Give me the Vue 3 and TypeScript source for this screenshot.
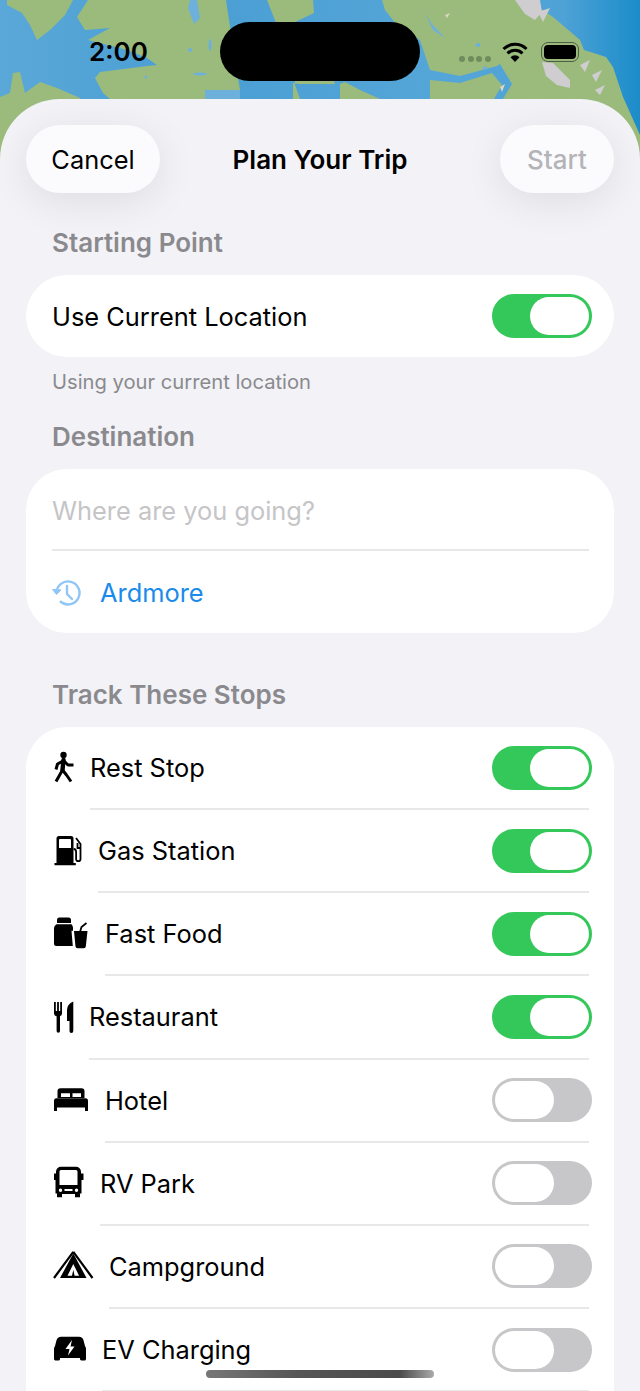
<script setup lang="ts">
interface Stop {
  name: string
  on: boolean
  width: number
  icon: string
}

const stops: Stop[] = [
  { name: 'Rest Stop', on: true, width: 23, icon: 'walk' },
  { name: 'Gas Station', on: true, width: 31, icon: 'gas' },
  { name: 'Fast Food', on: true, width: 38, icon: 'food' },
  { name: 'Restaurant', on: true, width: 22, icon: 'fork' },
  { name: 'Hotel', on: false, width: 38, icon: 'bed' },
  { name: 'RV Park', on: false, width: 33, icon: 'bus' },
  { name: 'Campground', on: false, width: 42, icon: 'tent' },
  { name: 'EV Charging', on: false, width: 35, icon: 'car' },
]
</script>

<template>
  <div class="page">
    <svg class="map" width="640" height="190" viewBox="0 0 640 190">
      <defs>
        <linearGradient id="sea" x1="0" y1="0" x2="1" y2="0">
          <stop offset="0" stop-color="#5aa8d8" />
          <stop offset="0.3" stop-color="#4a9ed3" />
          <stop offset="0.7" stop-color="#55a6d8" />
          <stop offset="0.88" stop-color="#4ea2d6" />
          <stop offset="1" stop-color="#1b8cca" />
        </linearGradient>
        <filter id="soft"><feGaussianBlur stdDeviation="0.7" /></filter>
      </defs>
      <rect width="640" height="190" fill="url(#sea)" />
      <g fill="#9bbb7d" filter="url(#soft)">
        <!-- top left land -->
        <path d="M7 0H73L65 15 50 30 37 40 30 25 22 13 7 5Z" />
        <!-- middle land, north of the inlet -->
        <path d="M88 0H226L232 40 240 90 212 98H205L190 90 160 72 157 65 147 58 127 50 100 43 88 40 110 28 85 30 77 17Z" />
        <path d="M157 65L147 66 100 72 95 78 103 93 110 99H205V90Z" />
        <!-- bottom left land -->
        <path d="M0 97L10 93 13 73 20 72 25 93 40 82 57 88 80 98 80 190H0Z" />
        <!-- between the bays -->
        <path d="M267 0H313L314 13 293 23 295 85 300 99H293V83L300 84Z" />
        <path d="M298 84H335L330 70H300Z" />
        <path d="M340 99V84L345 82 360 90 380 99Z" />
        <!-- main land on the right -->
        <path d="M382 0H528L553 17 580 40 584 50 606 57 613 67 623 97 640 135V190H540V99H503L512 84 500 64 497 66 460 76 430 70 420 40 397 25 385 10Z" />
        <path d="M430 80L460 83 492 73 502 85 494 99H430Z" />
        <path d="M0 120H70V190H0Z" />
      </g>
      <g fill="#6db0dc" filter="url(#soft)">
        <path d="M190 0H197L200 18 194 24 188 8Z" />
        <ellipse cx="190" cy="50" rx="2" ry="2" />
        <ellipse cx="210" cy="45" rx="1.500" ry="6" />
        <ellipse cx="200" cy="74" rx="7" ry="1.500" />
        <ellipse cx="146" cy="77" rx="1.500" ry="1.500" />
        <ellipse cx="478" cy="45" rx="2.500" ry="2" />
        <ellipse cx="485" cy="68" rx="2.500" ry="1.500" />
        <path d="M425 14L432 24 445 38 433 30Z" />
        <path d="M205 90H240V99H205Z" />
      </g>
      <g fill="#cfcdd0" filter="url(#soft)">
        <path d="M515 0H540L542 12 535 20 525 14Z" />
        <path d="M538 12L550 8 543 22Z" />
        <path d="M542 62L553 63 570 80 570 88 557 85 546 76Z" />
        <path d="M580 65L590 60 585 72Z M592 75L602 70 596 82Z M595 90L605 85 600 95Z" />
        <path d="M445 15L450 13 447 18Z M500 87L505 84 502 92Z" fill="#dcd8c0" />
      </g>
    </svg>

    <div class="status">
      <span class="time">2:00</span>
      <div class="island"></div>
      <div class="signal"><i></i><i></i><i></i><i></i></div>
      <svg class="wifi" width="26" height="20" viewBox="0 0 26 20">
        <path d="M1.500 7a16.500 16.500 0 0 1 23 0M5.500 11.300a11 11 0 0 1 15 0" fill="none" stroke="#000" stroke-width="3" />
        <path d="M13 20l-4.500-4.700a6 6 0 0 1 9 0z" fill="#000" />
      </svg>
      <div class="battery"><div class="battery__fill"></div></div>
    </div>

    <main class="sheet">
      <header class="bar">
        <button class="pill pill--cancel">Cancel</button>
        <h1>Plan Your Trip</h1>
        <button class="pill pill--start">Start</button>
      </header>

      <h2 class="label label--first">Starting Point</h2>
      <section class="card">
        <div class="row-single">
          <span>Use Current Location</span>
          <div class="toggle toggle--on"><div class="toggle__knob"></div></div>
        </div>
      </section>
      <p class="note">Using your current location</p>

      <h2 class="label label--dest">Destination</h2>
      <section class="card card--dest">
        <div class="placeholder">Where are you going?</div>
        <div class="recent">
          <svg width="29" height="30" viewBox="0 0 29 30" fill="none" stroke="#8fc6f6" stroke-width="2.400">
            <path d="M4.500 15a11.500 11.500 0 1 1 3.500 8.200" />
            <path d="M0.500 11.500l4 5 4.500-4.600z" fill="#8fc6f6" stroke-width="1" />
            <path d="M15 8v8l5 5" stroke-linecap="round" />
          </svg>
          <span>Ardmore</span>
        </div>
      </section>

      <h2 class="label label--track">Track These Stops</h2>
      <section class="card card--stops">
        <div v-for="stop in stops" :key="stop.name" class="stop">
          <svg class="stop__icon" :width="stop.width" height="40" :viewBox="`0 0 ${stop.width} 40`">
            <g v-if="stop.icon === 'walk'">
              <circle cx="11.500" cy="7" r="3.200" />
              <path d="M11.500 12L10.500 22" fill="none" stroke="#000" stroke-width="4.400" stroke-linecap="round" />
              <path d="M11 13L5.500 16 4 21.500M12 13l4 4h5.500M10.500 22l-6.500 11.500M10.500 22l4 5 4.500 6.500" fill="none" stroke="#000" stroke-width="3" stroke-linejoin="round" />
            </g>
            <g v-else-if="stop.icon === 'gas'">
              <path fill-rule="evenodd" d="M7 5h12a2.500 2.500 0 0 1 2.500 2.500V32h2.300v2.200H2.500V32h2V7.500A2.500 2.500 0 0 1 7 5zM8 8a1 1 0 0 0-1 1v8h12V9a1 1 0 0 0-1-1z" />
              <path d="M24 7l4.500 6v15a2.200 2.200 0 0 1-4.400 0v-7q0-3-2.500-3M25.500 12v5h3" fill="none" stroke="#000" stroke-width="1.800" />
            </g>
            <g v-else-if="stop.icon === 'food'">
              <path d="M7 3.500h9.500a2.500 2.500 0 0 1 2.500 2.500v3h-14V6A2.500 2.500 0 0 1 7 3.500z" />
              <path d="M4.500 10.300H19.500q1.500 1.500 1.500 3.500v3h-1.500l1.300 15.200H4.500A2.500 2.500 0 0 1 2 29.500V14q0-2 2.500-3.700z" />
              <path d="M22 17h13.500l-1.700 15.500a2 2 0 0 1-2 1.800h-6.300a2 2 0 0 1-2-1.800z" />
              <path d="M28 18l1.500-5 5-4" fill="none" stroke="#000" stroke-width="1.800" />
            </g>
            <g v-else-if="stop.icon === 'fork'">
              <path d="M2 5h1.800v9h1.300V5h1.800v9h1.300V5H10v11.500a3 3 0 0 1-2 2.800V34a1.700 1.700 0 0 1-3.400 0V19.300A3 3 0 0 1 2 16.500z" />
              <path d="M21.300 4.500V34a1.900 1.900 0 0 1-3.800 0V24h-2.500V13q0-6 6.300-8.500z" />
            </g>
            <g v-else-if="stop.icon === 'bed'">
              <path fill-rule="evenodd" d="M8.500 8.300h21a3 3 0 0 1 3 3V18H5.500v-6.700a3 3 0 0 1 3-3zM9 13.200V17h9v-3.800zM20.500 13.200V17H29v-3.800z" />
              <path d="M4.500 18.300h29a2.500 2.500 0 0 1 2.500 2.500V31h-3v-3.500H5V31H2V20.800A2.500 2.500 0 0 1 4.500 18.300z" />
            </g>
            <g v-else-if="stop.icon === 'bus'">
              <path fill-rule="evenodd" d="M9 3.700h15a5 5 0 0 1 5 5v1.800h2.500v6.500H29.500V30.500H28v3.800h-5V31H10v3.300H5V30.500H3.500V17H2v-6.500h2V8.700a5 5 0 0 1 5-5zM9 7a1.500 1.500 0 0 0-1.500 1.500V22h18V8.500A1.500 1.500 0 0 0 24 7zM8.500 25.500a1.700 1.700 0 1 0 0 3.400 1.700 1.700 0 0 0 0-3.400zM24.500 25.500a1.700 1.700 0 1 0 0 3.400 1.700 1.700 0 0 0 0-3.400zM12.500 26v2h8v-2z" />
            </g>
            <g v-else-if="stop.icon === 'tent'">
              <path d="M21.300 7.500L34.500 32H8z" />
              <path d="M21.300 5.800L2 32M21.300 5.800L40.500 32" fill="none" stroke="#000" stroke-width="2.200" />
              <path d="M21.300 18L15.500 29.800h4.500l1.300-6 1.300 6h4.500z" fill="#fff" />
            </g>
            <g v-else>
              <path fill-rule="evenodd" d="M9 6.700h18q3.500 0 4.500 3.500L33 16q1 1.500 1 3v10a1.600 1.600 0 0 1-1.600 1.600h-3A1.600 1.600 0 0 1 28 29v-1H8v1a1.600 1.600 0 0 1-1.600 1.600h-3A1.600 1.600 0 0 1 2 29V19q0-1.500 1-3l1.500-5.800Q5.500 6.700 9 6.700zM20 10l-6.500 9h4l-1.500 6.500 6.500-9h-4z" />
            </g>
          </svg>
          <div class="stop__body">
            <span>{{ stop.name }}</span>
            <div class="toggle" :class="{ 'toggle--on': stop.on }"><div class="toggle__knob"></div></div>
          </div>
        </div>
      </section>
    </main>

    <div class="home"></div>
  </div>
</template>

<style>
html,
body {
  margin: 0;
  background: #f2f2f7;
}
</style>

<style scoped>
.page {
  position: relative;
  width: 640px;
  height: 1391px;
  overflow: hidden;
  font-family: Inter, "Liberation Sans", sans-serif;
  color: #000;
}

.map {
  position: absolute;
  top: 0;
  left: 0;
}

.status {
  position: relative;
  height: 99px;
}

.time {
  position: absolute;
  left: 89px;
  top: 36px;
  font-size: 26px;
  font-weight: 600;
  line-height: 32px;
}

.island {
  position: absolute;
  left: 220px;
  top: 22px;
  width: 200px;
  height: 59px;
  border-radius: 30px;
  background: #000;
}

.signal {
  position: absolute;
  left: 459px;
  top: 56px;
  display: flex;
  gap: 2.500px;
}

.signal i {
  width: 6px;
  height: 6px;
  border-radius: 3px;
  background: #6f8c5e;
}

.wifi {
  position: absolute;
  left: 502px;
  top: 42px;
}

.battery {
  position: absolute;
  left: 541px;
  top: 42px;
  width: 38px;
  height: 20px;
  box-sizing: border-box;
  border: 1px solid #4f5c48;
  border-radius: 7px;
  padding: 2px;
}

.battery__fill {
  height: 100%;
  border-radius: 4px;
  background: #000;
}

.sheet {
  position: relative;
  height: 1292px;
  box-sizing: border-box;
  padding: 26px 26px 0;
  background: #f2f2f7;
  border-radius: 60px 60px 0 0;
  overflow: hidden;
}

.bar {
  display: grid;
  grid-template-columns: 1fr auto 1fr;
  align-items: center;
  height: 68px;
}

.bar h1 {
  margin: 0;
  font-size: 26px;
  font-weight: 600;
}

.pill {
  height: 68px;
  border: 0;
  border-radius: 34px;
  background: #fbfbfe;
  box-shadow: 0 8px 40px rgba(0, 0, 0, 0.09);
  font: inherit;
  font-size: 25.400px;
  color: #000;
}

.pill--cancel {
  justify-self: start;
  width: 134px;
}

.pill--start {
  justify-self: end;
  width: 114px;
  font-size: 26px;
  font-weight: 500;
  color: #b4b4b8;
}

.label {
  margin: 0 0 0 26px;
  font-size: 26px;
  font-weight: 600;
  line-height: 32px;
  color: #8a8a8e;
}

.label--first {
  margin-top: 34px;
}

.label--dest {
  margin-top: 27px;
}

.label--track {
  margin-top: 46px;
}

.card {
  margin-top: 16px;
  background: #fff;
  border-radius: 41px;
  overflow: hidden;
}

.row-single {
  display: flex;
  align-items: center;
  justify-content: space-between;
  height: 82px;
  padding: 0 22px 0 26px;
  font-size: 25.400px;
}

.row-single .toggle {
  margin-right: 0;
}

.note {
  margin: 13px 0 0 26px;
  font-size: 20.200px;
  line-height: 24px;
  color: #8a8a8e;
}

.card--dest {
  height: 164px;
}

.placeholder {
  height: 82px;
  margin: 0 25px 0 26px;
  box-sizing: border-box;
  border-bottom: 2px solid #e8e8ea;
  font-size: 25.400px;
  line-height: 84px;
  color: #c5c5c7;
}

.recent {
  display: flex;
  align-items: center;
  gap: 19px;
  height: 83px;
  padding-left: 26px;
  font-size: 25.400px;
  color: #1a8bea;
}

.card--stops {
  height: 700px;
  border-radius: 41px 41px 0 0;
}

.stop {
  display: flex;
  align-items: stretch;
  gap: 15px;
  padding: 0 25px 0 26px;
}

.stop__icon {
  flex: none;
  align-self: center;
  margin-bottom: 2px;
}

.stop__body {
  flex: 1;
  display: flex;
  align-items: center;
  justify-content: space-between;
  height: 81.150px;
  border-bottom: 2px solid #e8e8ea;
  font-size: 25.400px;
}

.toggle {
  position: relative;
  flex: none;
  width: 100px;
  height: 44px;
  margin-right: -3px;
  border-radius: 22px;
  background: #c7c7c9;
}

.toggle--on {
  background: #34c759;
}

.toggle__knob {
  position: absolute;
  top: 3px;
  left: 3px;
  width: 59px;
  height: 38px;
  border-radius: 19px;
  background: #fff;
}

.toggle--on .toggle__knob {
  left: 38px;
}

.home {
  position: absolute;
  left: 206px;
  top: 1370px;
  width: 228px;
  height: 8px;
  border-radius: 4px;
  background: linear-gradient(90deg, #777 0%, #555 40%, #4a4a4a 85%, #aaa 100%);
}
</style>
